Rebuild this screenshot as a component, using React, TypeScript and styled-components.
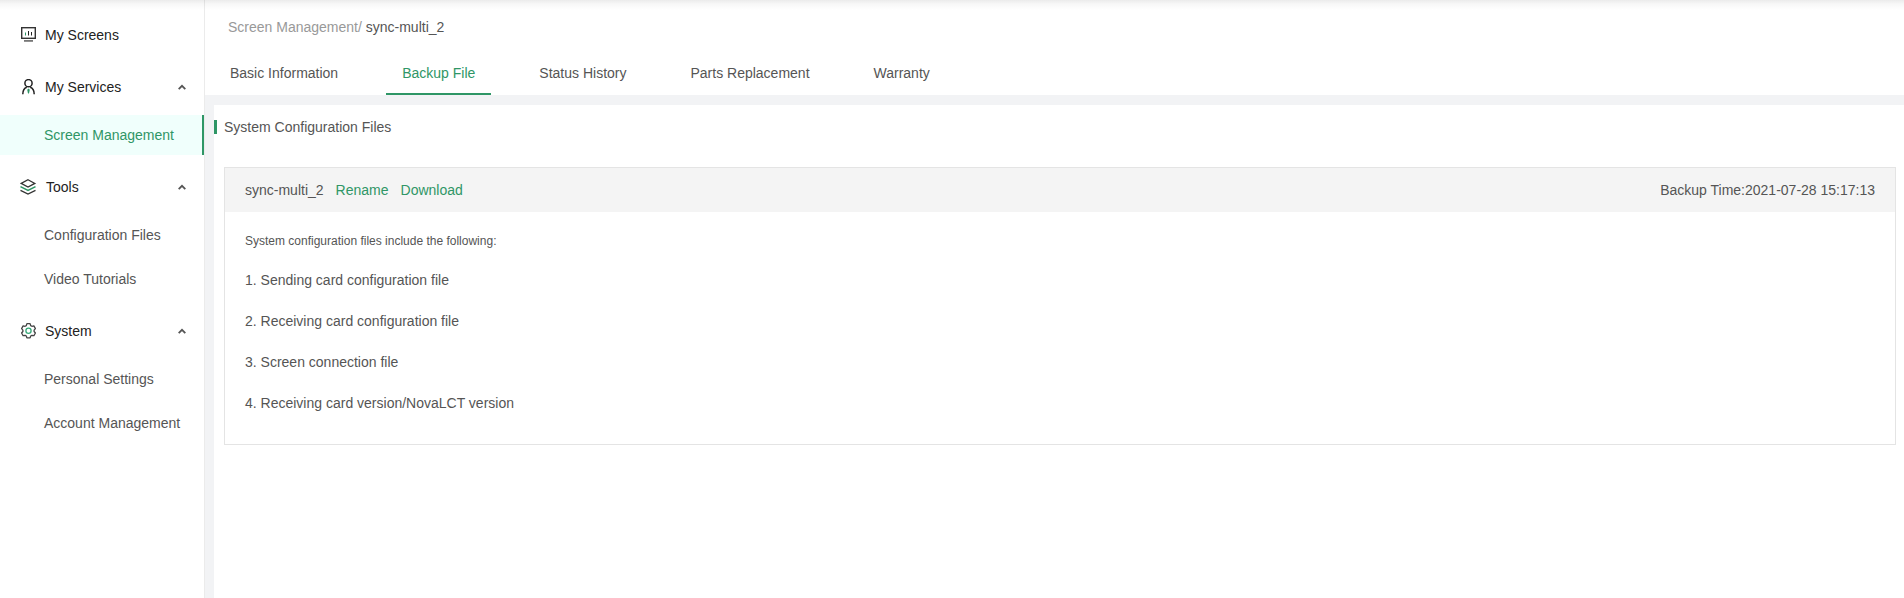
import React from 'react';
import styled, { createGlobalStyle } from 'styled-components';

const green = '#2f9666';

const GlobalStyle = createGlobalStyle`
  *, *::before, *::after { box-sizing: border-box; }
  body {
    margin: 0;
    background: #fff;
    color: #555;
    font: 14px/20px "Liberation Sans", Arial, sans-serif;
  }
  h1, p, ul, ol { margin: 0; padding: 0; font: inherit; list-style: none; }
  a { color: inherit; text-decoration: none; }
  button { font: inherit; color: inherit; background: none; border: 0; padding: 0; cursor: pointer; }
`;

const Page = styled.div`
  position: relative;
  display: flex;
  min-height: 100vh;
  background: #f2f3f5;
`;

const TopShadow = styled.div`
  position: absolute;
  inset: 0 0 auto;
  height: 10px;
  background: linear-gradient(rgba(0, 0, 0, 0.08), rgba(0, 0, 0, 0.03) 40%, rgba(0, 0, 0, 0));
  pointer-events: none;
`;

const Sidebar = styled.nav`
  flex: none;
  display: flex;
  flex-direction: column;
  gap: 12px;
  width: 205px;
  padding-top: 15px;
  background: #fff;
  border-right: 1px solid #ebebeb;
`;

const Group = styled.div`
  display: flex;
  flex-direction: column;
  gap: 8px;
`;

const groupRow = `
  display: flex;
  align-items: center;
  gap: 9px;
  width: 100%;
  height: 40px;
  padding: 0 17px 0 20px;
  color: #222;
  text-align: left;
`;

const GroupLink = styled.a`${groupRow}`;
const GroupButton = styled.button`${groupRow}`;

const GroupLabel = styled.span`
  flex: 1;
`;

const Children = styled.ul`
  display: flex;
  flex-direction: column;
  gap: 4px;
`;

const ChildLink = styled.a<{ $active?: boolean }>`
  display: flex;
  align-items: center;
  height: 40px;
  padding-left: 44px;
  color: ${(p) => (p.$active ? green : '#555')};
  background: ${(p) => (p.$active ? '#f0fffc' : 'transparent')};
  border-right: 2px solid ${(p) => (p.$active ? green : 'transparent')};
`;

const Main = styled.main`
  flex: 1;
  min-width: 0;
  display: flex;
  flex-direction: column;
  gap: 10px;
`;

const Header = styled.header`
  display: flex;
  flex-direction: column;
  gap: 14px;
  padding: 17px 9px 0;
  background: #fff;
`;

const Breadcrumb = styled.div`
  padding-left: 14px;
  color: #555;

  a { color: #999; }
`;

const Tabs = styled.div`
  display: flex;
  gap: 32px;
`;

const Tab = styled.button<{ $active?: boolean }>`
  height: 44px;
  padding: 0 16px;
  color: ${(p) => (p.$active ? green : '#555')};
  border-top: 2px solid transparent;
  border-bottom: 2px solid ${(p) => (p.$active ? green : 'transparent')};
`;

const Panel = styled.section`
  flex: 1;
  margin-left: 9px;
  padding: 12px 8px 0 0;
  background: #fff;
`;

const PanelTitle = styled.h1`
  display: flex;
  align-items: center;
  gap: 7px;

  &::before {
    content: '';
    width: 3px;
    height: 14px;
    background: ${green};
  }
`;

const Card = styled.article`
  margin: 30px 0 0 10px;
  border: 1px solid #e4e4e4;
`;

const CardHeader = styled.div`
  display: flex;
  align-items: center;
  gap: 12px;
  height: 44px;
  padding: 0 20px;
  background: #f4f4f4;
`;

const TextButton = styled.button`
  color: ${green};
`;

const BackupTime = styled.span`
  margin-left: auto;
`;

const CardBody = styled.div`
  padding: 20px 20px 30px;
`;

const Intro = styled.p`
  font-size: 12px;
  line-height: 18px;
`;

const FileItem = styled.li`
  margin-top: 20px;
  line-height: 21px;
`;

const ScreensIcon = () => (
  <svg width="16" height="16" viewBox="0 0 16 16" fill="none" aria-hidden="true">
    <rect x="1.7" y="0.7" width="13.6" height="10.6" stroke="#333" strokeWidth="1.4" />
    <path d="M4 13.9h9" stroke="#777" strokeWidth="1.8" />
    <path d="M5.5 5.5v3" stroke={green} strokeWidth="1" />
    <path d="M8.5 4v4.500M11.5 5v3.500" stroke="#222" strokeWidth="1" />
  </svg>
);

const ServicesIcon = () => (
  <svg width="16" height="16" viewBox="0 0 16 16" fill="none" aria-hidden="true">
    <circle cx="8.5" cy="4.2" r="3.6" stroke="#222" strokeWidth="1.5" />
    <path d="M2.8 15.200c0-3.800 1.500-6.200 4-7M14.200 15.200c0-3.800-1.500-6.200-4-7" stroke="#222" strokeWidth="1.5" />
    <path d="M8.500 9.500l1.300 1.300-.6 2.600-.7 1.600-.7-1.600-.6-2.600z" fill={green} />
  </svg>
);

const ToolsIcon = () => (
  <svg width="17" height="16" viewBox="0 0 17 16" fill="none" aria-hidden="true">
    <path d="M8 .8l6.800 3.600L8 8 1.200 4.400z" stroke="#333" strokeWidth="1.3" />
    <path d="M.5 7.600L8 11.400l7.500-3.800" stroke={green} strokeWidth="1.6" />
    <path d="M.5 11.300L8 15l7.500-3.700" stroke="#333" strokeWidth="1.3" />
  </svg>
);

const SystemIcon = () => (
  <svg width="16" height="16" viewBox="0 0 16 16" fill="none" aria-hidden="true">
    <path
      d="M6.900.7h3.200l.6 1.900 1.200.7 2-.4 1.500 2.700-1.300 1.500v1.400l1.300 1.500-1.500 2.700-2-.4-1.200.7-.6 1.900H6.900l-.6-1.900-1.200-.7-2 .4L1.600 10l1.300-1.500V7.100L1.600 5.600l1.500-2.700 2 .4 1.200-.7z"
      stroke="#444"
      strokeWidth="1.3"
      strokeLinejoin="round"
    />
    <circle cx="8.500" cy="7.800" r="2.600" stroke="#35a878" strokeWidth="1.3" />
  </svg>
);

const Chevron = () => (
  <svg width="10" height="8" viewBox="0 0 10 8" fill="none" aria-hidden="true">
    <path d="M1.7 6.200L5 2.800l3.300 3.400" stroke="#555" strokeWidth="1.8" />
  </svg>
);

const groups = [
  { label: 'My Services', Icon: ServicesIcon, items: ['Screen Management'] },
  { label: 'Tools', Icon: ToolsIcon, items: ['Configuration Files', 'Video Tutorials'] },
  { label: 'System', Icon: SystemIcon, items: ['Personal Settings', 'Account Management'] },
];

const tabs = ['Basic Information', 'Backup File', 'Status History', 'Parts Replacement', 'Warranty'];

const files = [
  'Sending card configuration file',
  'Receiving card configuration file',
  'Screen connection file',
  'Receiving card version/NovaLCT version',
];

export default function App() {
  return (
    <Page>
      <GlobalStyle />
      <Sidebar>
        <GroupLink href="#screens">
          <ScreensIcon />
          <GroupLabel>My Screens</GroupLabel>
        </GroupLink>
        {groups.map(({ label, Icon, items }) => (
          <Group key={label}>
            <GroupButton type="button" aria-expanded="true">
              <Icon />
              <GroupLabel>{label}</GroupLabel>
              <Chevron />
            </GroupButton>
            <Children>
              {items.map((item) => (
                <li key={item}>
                  <ChildLink href="#" $active={item === 'Screen Management'}>{item}</ChildLink>
                </li>
              ))}
            </Children>
          </Group>
        ))}
      </Sidebar>
      <Main>
        <Header>
          <Breadcrumb>
            <a href="#management">Screen Management/</a> sync-multi_2
          </Breadcrumb>
          <Tabs role="tablist">
            {tabs.map((tab) => (
              <Tab
                key={tab}
                type="button"
                role="tab"
                aria-selected={tab === 'Backup File'}
                $active={tab === 'Backup File'}
              >
                {tab}
              </Tab>
            ))}
          </Tabs>
        </Header>
        <Panel>
          <PanelTitle>System Configuration Files</PanelTitle>
          <Card>
            <CardHeader>
              <span>sync-multi_2</span>
              <TextButton type="button">Rename</TextButton>
              <TextButton type="button">Download</TextButton>
              <BackupTime>Backup Time:2021-07-28 15:17:13</BackupTime>
            </CardHeader>
            <CardBody>
              <Intro>System configuration files include the following:</Intro>
              <ol>
                {files.map((file, i) => (
                  <FileItem key={file}>{i + 1}. {file}</FileItem>
                ))}
              </ol>
            </CardBody>
          </Card>
        </Panel>
      </Main>
      <TopShadow />
    </Page>
  );
}
